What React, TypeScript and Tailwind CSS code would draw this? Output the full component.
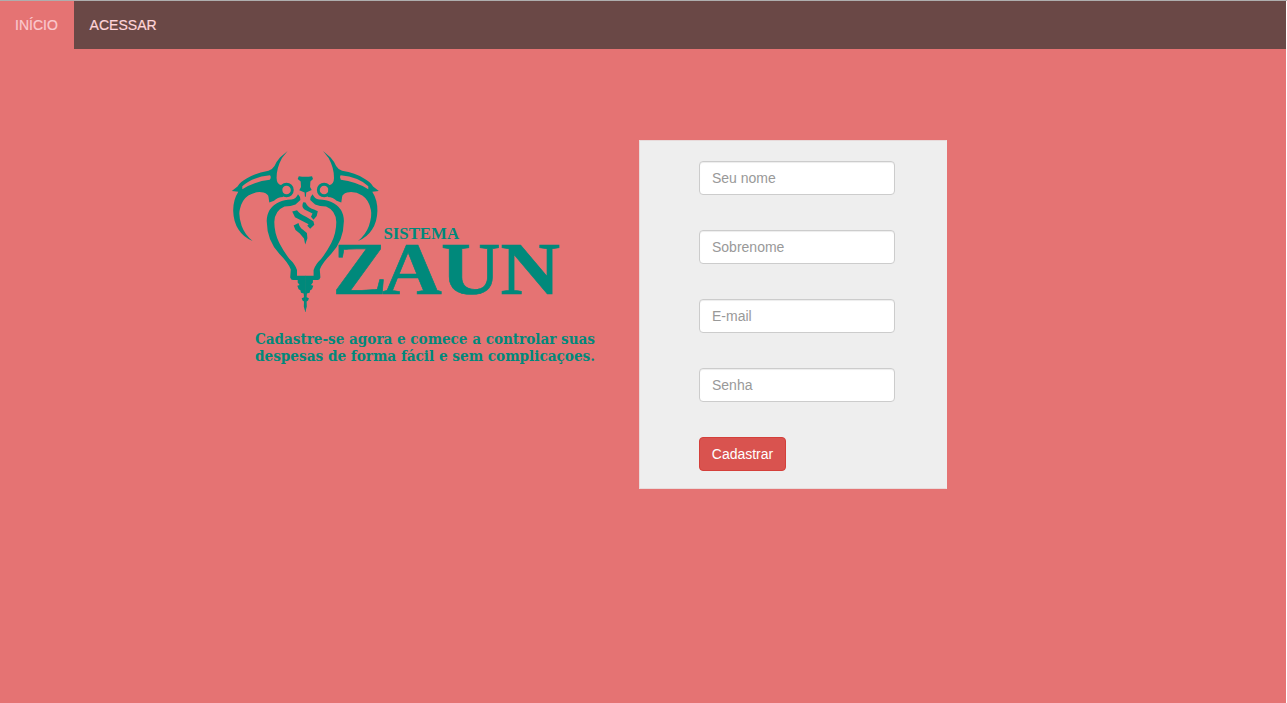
const fields = [
  { label: 'Seu nome', type: 'text' },
  { label: 'Sobrenome', type: 'text' },
  { label: 'E-mail', type: 'email' },
  { label: 'Senha', type: 'password' },
];

function Wing() {
  return (
    <>
      <path
        fillRule="evenodd"
        d="M287.6 151 L280 157.5 Q276 162 274.5 166 Q272 170 268.5 170.8 Q255 173 247 178.3 Q240 182 237.5 186.5 L231.8 191 L238.3 191.7 Q233 200 233.2 211 Q233.5 222 238.5 229.5 Q243.5 237.5 252.6 240.9 Q245 235 241.7 226 Q238.4 216 239.7 210 Q241.5 200 248.3 195.5 Q256 190.8 263.5 192.5 Q268.3 194 268.5 197 L269.3 202.5 L274 200.8 Q277.5 197.3 283 197 L281.7 185.3 Q276.6 184.5 276.6 178 Q276.5 168 282 158 Z M270 175.3 Q252 177 242.3 186.3 L242.3 189.2 Q255 181.3 269.8 179.7 Q271.6 177.5 270 175.3 Z"
      />
      <circle cx="286.5" cy="190" r="5.8" fill="none" stroke="#00897b" strokeWidth="2.9" />
      <path d="M298 194.3 Q296 199 291.5 199.4 Q284 199.4 279.3 202 Q267 207.5 266.7 221 Q267 241 279.5 254 Q288.5 263 290.8 269.5 L290.2 277.5 Q291 280 293 280 L297.7 280 L297.7 282.5 L299.6 285 L297.3 285.7 L298.6 289.2 L300.4 290.2 L301 292.7 L303.7 293.4 L304 297.2 L301.7 298.2 L302.5 300.5 L304 301.5 L303.8 306.5 L305.3 312 L305.5 312 L305.5 275.7 L297 275.7 L297 270 Q295 264 289.5 259 Q284 252 279.3 243 Q274.3 233 274.3 222 Q274.8 210.5 284.5 206.6 Q291 206.5 295.5 204.6 L300.4 200 L300 197 Z" />
    </>
  );
}

function Brand() {
  return (
    <svg className="block h-[230px] w-[385px]" viewBox="225 145 385 230" fill="#00897b" role="img">
      <Wing />
      <g transform="translate(610.6 0) scale(-1 1)">
        <Wing />
      </g>
      <path d="M298.8 176.2 Q305.3 177.4 312 176.2 L313 179 L310.4 181.4 L310.1 187 L311.7 190 L306.2 192.6 L305.9 196.8 L304.9 196.8 L304.6 192.6 L299.3 190.2 L301 187 L300.7 181.4 L297.7 179 Z" />
      <path d="M303.3 202.2 L305.5 202.5 Q308 208 314 209.5 L317.8 211.3 L316.7 216 L313.5 219.7 L311 216.8 L312.5 213.6 L304.5 209.6 Q300.9 206.5 303.3 202.2 Z" />
      <path d="M292.2 211.5 L297 210.3 Q299.5 214 306 216.8 L313.4 221.3 L314.3 224.8 L310.2 228.7 L307.3 225.7 L308.6 224.2 L295 217.2 Z" />
      <path d="M293.6 225.5 L298.5 223 Q299.3 227.3 303 229.8 L306.9 233 L307.4 238.2 L305.2 244.5 L304 238.4 L299.8 233.4 L295.5 230 Z" />
      <g fontFamily="'Liberation Serif', serif" fontWeight="700">
        <text x="383.5" y="239" fontSize="16" textLength="75.5" lengthAdjust="spacingAndGlyphs">SISTEMA</text>
        <text transform="translate(0 294) scale(1.1 1)" x="302.2 347.6 400.8 454.9" y="0" fontSize="75" stroke="#00897b" strokeWidth="0.6">ZAUN</text>
      </g>
      <g fontFamily="'DejaVu Serif', serif" fontWeight="700" fontSize="14">
        <text x="255" y="344" textLength="340" lengthAdjust="spacingAndGlyphs">Cadastre-se agora e comece a controlar suas</text>
        <text x="255" y="361.3" textLength="340" lengthAdjust="spacingAndGlyphs">despesas de forma fácil e sem complicaçoes.</text>
      </g>
    </svg>
  );
}

export default function App() {
  return (
    <div className="h-[703px] overflow-hidden bg-white pr-px font-['Liberation_Sans',Arial,sans-serif] text-sm leading-5">
      <div className="h-full bg-[#e57373]">
        <nav className="-mr-px flex h-[49px] border-t border-[#aeaeae]">
          <a className="flex w-[74px] items-center justify-center bg-[#e57373] pr-px text-[#fbc9cd] [-webkit-text-stroke:0.2px]" href="#inicio">
            INÍCIO
          </a>
          <div className="mr-px flex flex-1 items-center bg-[#6a4846] pl-[15.5px]">
            <a className="tracking-[0.05px] text-[#ffd5d9] [-webkit-text-stroke:0.2px]" href="#acessar">
              ACESSAR
            </a>
          </div>
        </nav>
        <main className="flex items-start pl-[225px] pt-[91px]">
          <div className="pt-[5px]">
            <Brand />
          </div>
          <form className="ml-[29px] flex h-[349px] w-[308px] flex-col items-start gap-[35px] border border-[#e8dada] border-r-[#eeeeee] bg-[#eeeeee] pl-[59px] pt-5">
            {fields.map((field) => (
              <input
                key={field.label}
                type={field.type}
                placeholder={field.label}
                className="block h-[34px] w-[196px] shrink-0 rounded border border-[#cccccc] bg-white px-3 py-1.5 text-sm shadow-[inset_0_1px_1px_rgba(0,0,0,0.075)] placeholder:text-[#999999]"
              />
            ))}
            <button
              type="button"
              className="h-[34px] w-[87px] shrink-0 rounded border border-[#d43f3a] bg-[#d9534f] text-sm text-white"
            >
              Cadastrar
            </button>
          </form>
        </main>
      </div>
    </div>
  );
}
